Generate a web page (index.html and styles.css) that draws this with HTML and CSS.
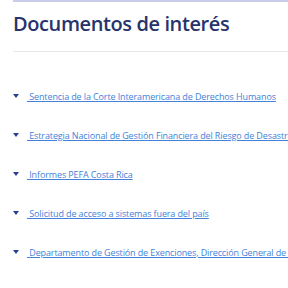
FILE: index.html
```html
<!DOCTYPE html>
<html lang="es">
<head>
    <meta charset="UTF-8">
    <title>Documentos de interés</title>
    <link rel="stylesheet" href="styles.css">
</head>
<body>
    <div class="panel">
        <h2 class="panel-title">Documentos de interés</h2>

        <ul class="doc-list">
            <li class="doc-item"><span class="caret"></span><a href="#"> Sentencia de la Corte Interamericana de Derechos Humanos</a></li>
            <li class="doc-item"><span class="caret"></span><a href="#"> Estrategia Nacional de Gestión Financiera del Riesgo de Desastres</a></li>
            <li class="doc-item"><span class="caret"></span><a href="#"> Informes PEFA Costa Rica</a></li>
            <li class="doc-item"><span class="caret"></span><a href="#"> Solicitud de acceso a sistemas fuera del país</a></li>
            <li class="doc-item"><span class="caret"></span><a href="#"> Departamento de Gestión de Exenciones, Dirección General de Hacienda</a></li>
        </ul>
    </div>
</body>
</html>
```

FILE: styles.css
```css
body {
    margin: 0;
    background: #fff;
    font-family: "Open Sans", "Noto Sans", sans-serif;
    overflow: hidden;
}

.panel {
    margin-left: 13px;
    border-top: 2px solid #c9cde9;
}

.panel-title {
    margin: 0;
    padding: 8px 0 14px 0;
    font-size: 20px;
    font-weight: 600;
    letter-spacing: -0.4px;
    line-height: 27px;
    color: #27336b;
    border-bottom: 1px solid #e9e9e9;
}

.doc-list {
    list-style: none;
    margin: 0;
    padding: 38px 0 0 0;
    display: flex;
    flex-direction: column;
    gap: 27px;
}

.doc-item {
    display: flex;
    align-items: center;
    white-space: nowrap;
    height: 12px;
}

.caret {
    width: 0;
    height: 0;
    border-left: 3px solid transparent;
    border-right: 3px solid transparent;
    border-top: 4px solid #2c3f8f;
    margin-right: 8px;
    flex-shrink: 0;
}

.doc-item a {
    color: #4382d8;
    font-size: 9px;
    letter-spacing: -0.12px;
    text-decoration: underline;
    white-space: pre;
}
```
